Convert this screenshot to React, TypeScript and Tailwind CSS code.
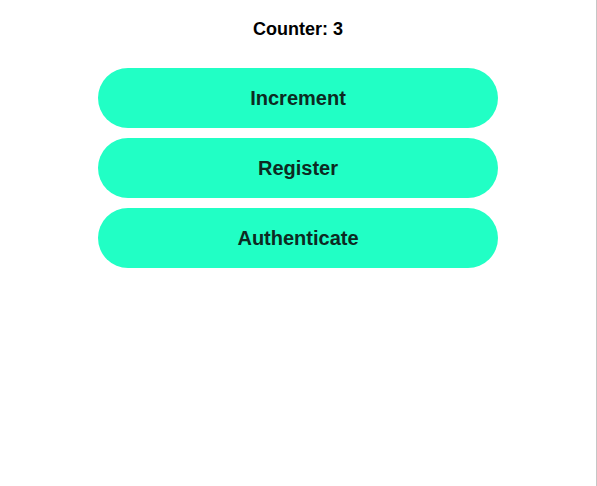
const buttons = ["Increment", "Register", "Authenticate"];

export default function App() {
  return (
    <div className="flex h-[486px] w-[597px] bg-white font-['Liberation_Sans',Arial,sans-serif]">
      <main className="flex w-[596px] flex-col items-center pt-[18px]">
        <h1 className="text-[18px] font-bold leading-[22px] text-black">Counter: 3</h1>
        <div className="mt-[28px] flex flex-col gap-[10px]">
          {buttons.map((label) => (
            <button
              key={label}
              className="h-[60px] w-[400px] rounded-full bg-[#21ffc5] text-[20px] font-bold text-[#0d2a22]"
            >
              {label}
            </button>
          ))}
        </div>
      </main>
      <div className="w-px bg-[#c6c6c6]" />
    </div>
  );
}
